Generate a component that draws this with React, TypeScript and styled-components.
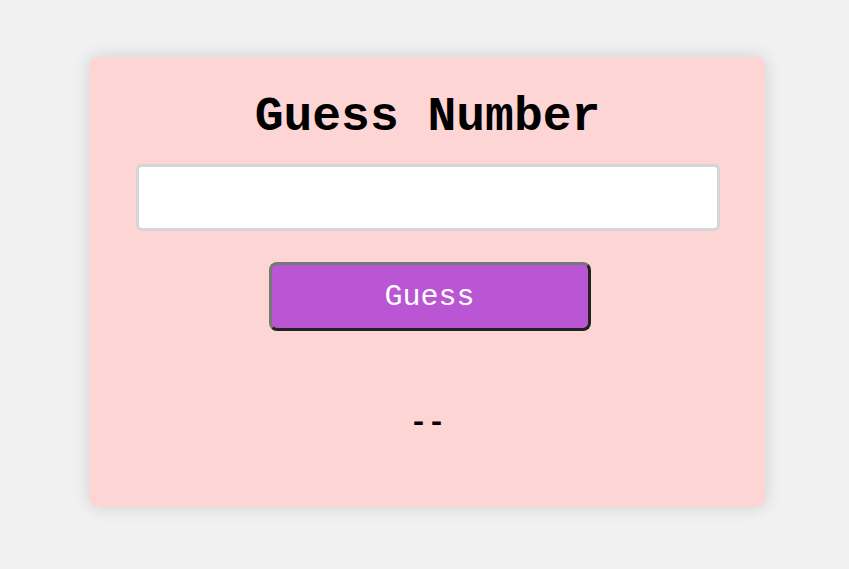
import React from "react";
import styled, { createGlobalStyle } from "styled-components";

const Global = createGlobalStyle`
  html, body { margin: 0; padding: 0; background: #f1f1f1; }
  body { font-family: "Liberation Mono", "Courier New", monospace; }
`;

const Page = styled.main`
  display: flex;
  justify-content: center;
  padding: 57px 0 0 6px;
  min-height: 569px;
  box-sizing: border-box;
`;

const Card = styled.section`
  width: 675px;
  height: 450px;
  box-sizing: border-box;
  background: #fdd5d5;
  border-radius: 8px;
  box-shadow: 0 0 18px rgba(0, 0, 0, 0.14);
  display: flex;
  flex-direction: column;
  align-items: center;
  padding-top: 33px;
`;

const Title = styled.h1`
  margin: 0;
  font-family: "Liberation Mono", "Courier New", monospace;
  font-weight: bold;
  font-size: 48px;
  line-height: 54px;
  color: #000;
`;

const Input = styled.input`
  margin-top: 20px;
  width: 584px;
  height: 67px;
  box-sizing: border-box;
  border: 3px solid #d6d6d6;
  border-radius: 6px;
  background: #fff;
  outline: none;
  font-family: "Liberation Mono", "Courier New", monospace;
  font-size: 24px;
  padding: 0 12px;
`;

const Button = styled.button`
  margin: 31px 0 0 4px;
  width: 322px;
  height: 69px;
  box-sizing: border-box;
  background: #ba55d3;
  color: #fff;
  border: 3px solid;
  border-color: #777 #222 #222 #777;
  border-radius: 8px;
  font-family: "Liberation Mono", "Courier New", monospace;
  font-size: 30px;
  cursor: pointer;
`;

const Result = styled.p`
  margin: 75px 0 0;
  font-family: "Liberation Mono", "Courier New", monospace;
  font-weight: bold;
  font-size: 30px;
  line-height: 34px;
  color: #000;
`;

export default function App() {
  return (
    <>
      <Global />
      <Page>
        <Card>
          <Title>Guess Number</Title>
          <Input type="text" />
          <Button>Guess</Button>
          <Result>--</Result>
        </Card>
      </Page>
    </>
  );
}
